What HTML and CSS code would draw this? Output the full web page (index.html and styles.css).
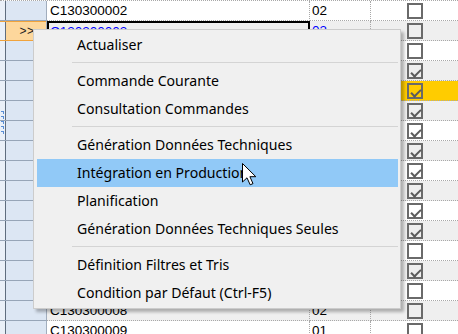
FILE: index.html
```html
<!DOCTYPE html>
<html lang="fr">
<head>
    <meta charset="UTF-8">
    <title>Commandes</title>
    <link rel="stylesheet" href="styles.css">
</head>
<body>
    <main class="grid">
        <div class="row">
            <div class="hd"></div>
            <div class="cell code">C130300002</div>
            <div class="cell ind">02</div>
            <div class="cell chk"><span class="box"></span></div>
        </div>
        <div class="row alt current">
            <div class="hd">&gt;&gt;</div>
            <div class="cell code selected">C130300003</div>
            <div class="cell ind">03</div>
            <div class="cell chk"><span class="box"></span></div>
        </div>
        <!-- lignes cachées sous le menu -->
        <div class="row">
            <div class="hd"></div><div class="cell code"></div><div class="cell ind"></div>
            <div class="cell chk"><span class="box"></span></div>
        </div>
        <div class="row alt">
            <div class="hd"></div><div class="cell code"></div><div class="cell ind"></div>
            <div class="cell chk"><span class="box on"></span></div>
        </div>
        <div class="row marked">
            <div class="hd"></div><div class="cell code"></div><div class="cell ind"></div>
            <div class="cell chk"><span class="box on"></span></div>
        </div>
        <div class="row alt">
            <div class="hd"></div><div class="cell code"></div><div class="cell ind"></div>
            <div class="cell chk"><span class="box on"></span></div>
        </div>
        <div class="row">
            <div class="hd"></div><div class="cell code"></div><div class="cell ind"></div>
            <div class="cell chk"><span class="box on"></span></div>
        </div>
        <div class="row alt">
            <div class="hd"></div><div class="cell code"></div><div class="cell ind"></div>
            <div class="cell chk"><span class="box on"></span></div>
        </div>
        <div class="row">
            <div class="hd"></div><div class="cell code"></div><div class="cell ind"></div>
            <div class="cell chk"><span class="box on"></span></div>
        </div>
        <div class="row alt">
            <div class="hd"></div><div class="cell code"></div><div class="cell ind"></div>
            <div class="cell chk"><span class="box on"></span></div>
        </div>
        <div class="row">
            <div class="hd"></div><div class="cell code"></div><div class="cell ind"></div>
            <div class="cell chk"><span class="box on"></span></div>
        </div>
        <div class="row alt">
            <div class="hd"></div><div class="cell code"></div><div class="cell ind"></div>
            <div class="cell chk"><span class="box on"></span></div>
        </div>
        <div class="row">
            <div class="hd"></div><div class="cell code"></div><div class="cell ind"></div>
            <div class="cell chk"><span class="box"></span></div>
        </div>
        <div class="row alt">
            <div class="hd"></div><div class="cell code"></div><div class="cell ind"></div>
            <div class="cell chk"><span class="box on"></span></div>
        </div>
        <div class="row">
            <div class="hd"></div><div class="cell code"></div><div class="cell ind"></div>
            <div class="cell chk"><span class="box"></span></div>
        </div>
        <div class="row alt">
            <div class="hd"></div>
            <div class="cell code">C130300008</div>
            <div class="cell ind">02</div>
            <div class="cell chk"><span class="box"></span></div>
        </div>
        <div class="row">
            <div class="hd"></div>
            <div class="cell code">C130300009</div>
            <div class="cell ind">01</div>
            <div class="cell chk"><span class="box"></span></div>
        </div>
    </main>

    <!-- poignée du séparateur à gauche -->
    <div class="grip"><i></i><i></i><i></i><i></i><i></i></div>

    <!-- menu contextuel -->
    <nav class="menu">
        <div class="item">Actualiser</div>
        <div class="sep"></div>
        <div class="item">Commande Courante</div>
        <div class="item">Consultation Commandes</div>
        <div class="sep"></div>
        <div class="item">Génération Données Techniques</div>
        <div class="item hover">Intégration en Production</div>
        <div class="item">Planification</div>
        <div class="item">Génération Données Techniques Seules</div>
        <div class="sep"></div>
        <div class="item">Définition Filtres et Tris</div>
        <div class="item">Condition par Défaut (Ctrl-F5)</div>
    </nav>

    <svg class="cursor" width="15" height="23" viewBox="0 0 15 23">
        <path d="M0.5 0.5 L0.5 19 L5 14.8 L8.2 21.8 L11 20.6 L7.9 13.7 L13.8 13.7 Z" fill="#fff" stroke="#000" stroke-width="1" stroke-linejoin="miter"/>
    </svg>
</body>
</html>
```

FILE: styles.css
```css
/* Grille de commandes */
* {
    margin: 0;
    padding: 0;
    box-sizing: border-box;
}

body {
    width: 458px;
    height: 334px;
    overflow: hidden;
    background: #ffffff;
    font-family: 'Liberation Sans', Arial, sans-serif;
    font-size: 13.5px;
    color: #000000;
}

.grid {
    border-top: 1px dotted #a8a8a8;
}

.row {
    display: grid;
    grid-template-columns: 47px 263px 61px 1fr;
    height: 20px;
    background: #ffffff;
}

.row.alt {
    background: #efefef;
}

.row.marked {
    background: #ffcc00;
}

.cell {
    height: 20px;
    line-height: 19px;
    border-bottom: 1px dotted #a8a8a8;
    border-right: 1px dotted #a8a8a8;
    white-space: nowrap;
    overflow: hidden;
}

.code {
    padding-left: 3px;
}

.ind {
    padding-left: 2px;
}

.chk {
    border-right: none;
    padding: 2px 0 0 36px;
}

/* cellule active */
.current .cell {
    color: #0000ff;
}

.selected {
    border: 2px solid #000000;
    padding-left: 1px;
    line-height: 17px;
}

/* en-tête de ligne */
.hd {
    height: 20px;
    background: linear-gradient(to right, #eaf0f8 0 5px, #5f6d7e 5px 6px, #dce6f3 6px);
    border-bottom: 1px solid #97a5b7;
    border-right: 1px solid #a1adbd;
    font-size: 12px;
    line-height: 21px;
    text-align: center;
    padding-left: 8px;
    color: #222222;
    letter-spacing: 0.5px;
}

.current .hd {
    background: linear-gradient(to right, #eaf0f8 0 5px, #5f6d7e 5px 6px, #fdd79c 6px);
    border-bottom-color: #f0a33c;
    box-shadow: inset 0 1px 0 #f0a33c;
}

/* case à cocher */
.box {
    display: block;
    width: 16px;
    height: 16px;
    border: 2px solid #6a6a6a;
    position: relative;
}

.box.on::after {
    content: '';
    position: absolute;
    left: 2px;
    top: 1px;
    width: 8px;
    height: 4px;
    border-left: 2px solid #5c5c5c;
    border-bottom: 2px solid #5c5c5c;
    transform: translate(0, 3px) rotate(-45deg);
}

.grip {
    position: absolute;
    left: 1px;
    top: 111px;
    display: flex;
    flex-direction: column;
    gap: 2px;
}

.grip i {
    display: block;
    width: 3px;
    height: 3px;
    border-top: 1px solid #5a8fd6;
    border-right: 1px solid #5a8fd6;
}

/* Menu contextuel */
.menu {
    position: absolute;
    left: 33px;
    top: 29px;
    width: 368px;
    padding: 1px 2px 1px 3px;
    background: #f0f0f0;
    border: 1px solid #cccccc;
    box-shadow: 3px 3px 3px rgba(0, 0, 0, 0.28);
    font-family: 'Noto Sans', 'Open Sans', sans-serif;
    font-size: 14.1px;
    color: #000000;
}

.item {
    height: 28px;
    line-height: 27px;
    padding-left: 40px;
    white-space: nowrap;
}

.item.hover {
    background: #91c9f7;
}

.sep {
    height: 8px;
    margin-left: 35px;
    padding-top: 3px;
}

.sep::before {
    content: '';
    display: block;
    height: 1px;
    background: #d4d4d4;
}

.cursor {
    position: absolute;
    left: 242px;
    top: 163px;
}
```
